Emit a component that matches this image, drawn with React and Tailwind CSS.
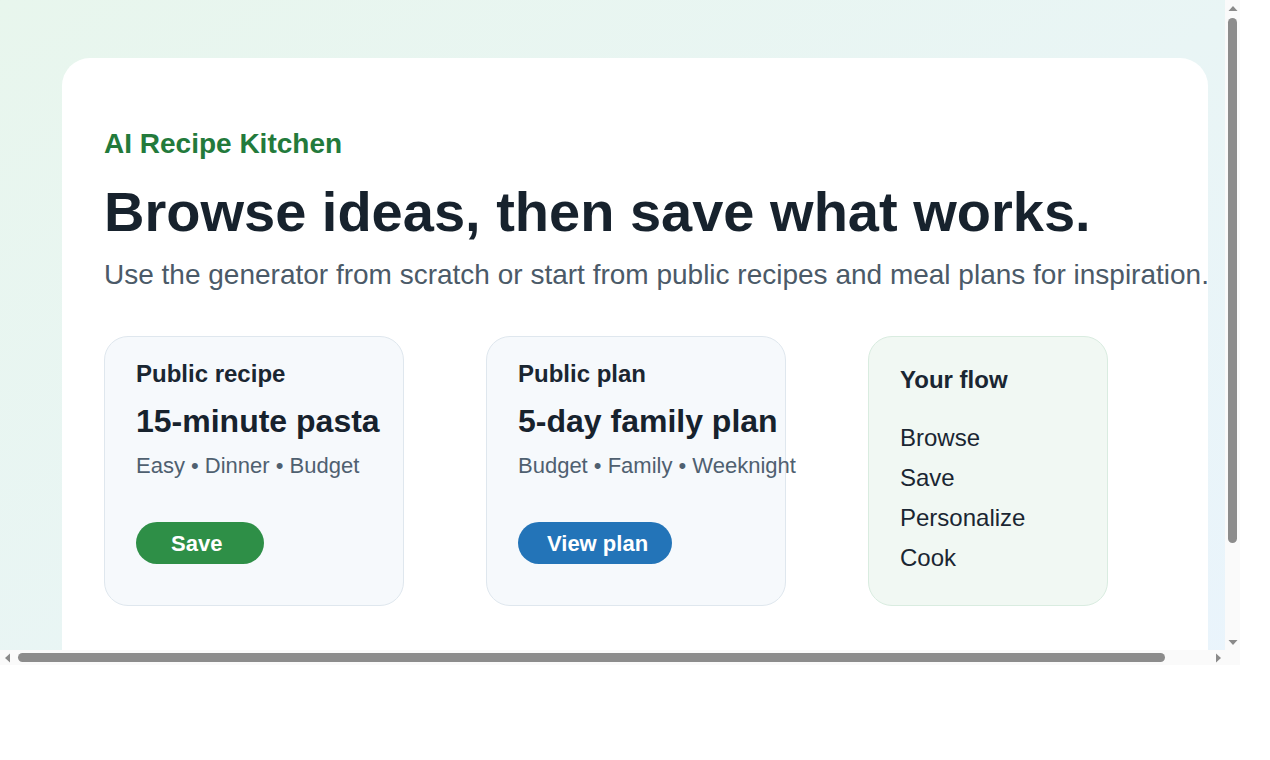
import React from "react";

const cards = [
  {
    label: "Public recipe",
    title: "15-minute pasta",
    meta: "Easy • Dinner • Budget",
    action: "Save",
    btn: "bg-[#2e8f47] w-[128px] pl-[35px]",
  },
  {
    label: "Public plan",
    title: "5-day family plan",
    meta: "Budget • Family • Weeknight",
    action: "View plan",
    btn: "bg-[#2374b8] w-[154px] pl-[29px]",
  },
];

const flow = ["Browse", "Save", "Personalize", "Cook"];

// tiny triangle used for the scrollbar arrows
const Arrow = ({ dir }) => {
  const pts = {
    up: "0.5,8 5,3 9.5,8",
    down: "0.5,2 5,7 9.5,2",
    left: "7,0.5 2,5 7,9.5",
    right: "3,0.5 8,5 3,9.5",
  }[dir];
  return (
    <svg width="10" height="10" viewBox="0 0 10 10" className="block">
      <polygon points={pts} fill="#8a8a8a" />
    </svg>
  );
};

const App = () => {
  return (
    <div className="font-['Liberation_Sans',Arial,sans-serif] bg-white h-[760px]">
      <div className="w-[1240px] flex flex-col">
        <div className="flex h-[650px]">
          {/* visible part of the page */}
          <div className="w-[1225px] h-[650px] overflow-hidden">
            <div className="w-[1270px] min-h-[767px] px-[62px] pt-[58px] bg-linear-to-br from-[#e8f6ed] to-[#eaf4fd]">
              <div className="bg-white rounded-[28px] px-[42px] pt-[70px] pb-[64px] min-h-[709px]">
                <p className="text-[28px] leading-[32px] font-bold text-[#237a3b]">
                  AI Recipe Kitchen
                </p>
                <h1 className="mt-[20px] text-[56px] leading-[64px] font-bold text-[#17222d] whitespace-nowrap">
                  Browse ideas, then save what works.
                </h1>
                <p className="mt-[13px] text-[28px] leading-[36px] text-[#4b5a68] whitespace-nowrap">
                  Use the generator from scratch or start from public recipes and meal plans for inspiration.
                </p>

                <div className="mt-[43px] flex gap-[82px]">
                  {cards.map((c) => (
                    <div
                      key={c.label}
                      className="w-[300px] h-[270px] shrink-0 rounded-[24px] border border-[#dfe7ee] bg-[#f6f9fc] px-[31px] pt-[23px]"
                    >
                      <p className="text-[24px] leading-[28px] font-bold text-[#1a2632]">
                        {c.label}
                      </p>
                      <p className="mt-[15px] text-[32px] leading-[36px] font-bold text-[#17222d] whitespace-nowrap">
                        {c.title}
                      </p>
                      <p className="mt-[13px] text-[22px] leading-[28px] text-[#4f6070] whitespace-nowrap">
                        {c.meta}
                      </p>
                      <button
                        className={`mt-[42px] h-[42px] rounded-full text-left text-white text-[22px] font-bold ${c.btn}`}
                      >
                        {c.action}
                      </button>
                    </div>
                  ))}

                  <div className="w-[240px] h-[270px] shrink-0 rounded-[24px] border border-[#d9ece0] bg-[#f1f8f3] px-[31px] pt-[29px]">
                    <p className="text-[24px] leading-[28px] font-bold text-[#1a2632]">
                      Your flow
                    </p>
                    <ul className="mt-[24px]">
                      {flow.map((f) => (
                        <li key={f} className="text-[24px] leading-[40px] text-[#1a2632]">
                          {f}
                        </li>
                      ))}
                    </ul>
                  </div>
                </div>
              </div>
            </div>
          </div>

          {/* vertical scrollbar */}
          <div className="w-[15px] bg-[#fafafa] flex flex-col items-center">
            <div className="h-[15px] flex items-center justify-center">
              <Arrow dir="up" />
            </div>
            <div className="flex-1 w-full px-[3px] pt-[3px]">
              <div className="h-[525px] rounded-full bg-[#8c8c8c]" />
            </div>
            <div className="h-[15px] flex items-center justify-center">
              <Arrow dir="down" />
            </div>
          </div>
        </div>

        {/* horizontal scrollbar */}
        <div className="flex h-[15px] bg-[#fafafa]">
          <div className="w-[15px] flex items-center justify-center">
            <Arrow dir="left" />
          </div>
          <div className="w-[1195px] py-[3px] pl-[3px]">
            <div className="w-[1147px] h-full rounded-full bg-[#8c8c8c]" />
          </div>
          <div className="w-[15px] flex items-center justify-center">
            <Arrow dir="right" />
          </div>
          <div className="w-[15px] bg-[#fafafa]" />
        </div>
      </div>
    </div>
  );
};

export default App;
